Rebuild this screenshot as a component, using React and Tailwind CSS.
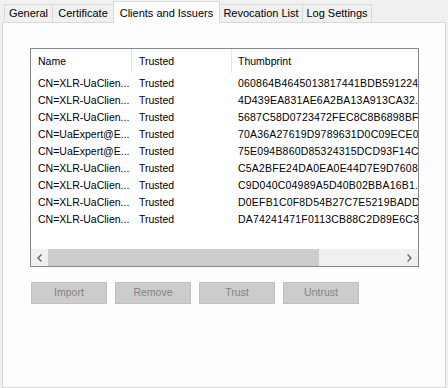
const tabs = [
  { label: 'General', w: 'w-[49px]' },
  { label: 'Certificate', w: 'w-[62px]' },
  { label: 'Clients and Issuers', w: 'w-[107px]', active: true },
  { label: 'Revocation List', w: 'w-[84px]' },
  { label: 'Log Settings', w: 'w-[70px]' },
]

// thumbprints as they show in the clipped column
const rows = [
  ['CN=XLR-UaClien...', 'Trusted', '060864B4645013817441BDB591224'],
  ['CN=XLR-UaClien...', 'Trusted', '4D439EA831AE6A2BA13A913CA32..'],
  ['CN=XLR-UaClien...', 'Trusted', '5687C58D0723472FEC8C8B6898BF.'],
  ['CN=UaExpert@E...', 'Trusted', '70A36A27619D9789631D0C09ECE0'],
  ['CN=UaExpert@E...', 'Trusted', '75E094B860D85324315DCD93F14C'],
  ['CN=XLR-UaClien...', 'Trusted', 'C5A2BFE24DA0EA0E44D7E9D7608.'],
  ['CN=XLR-UaClien...', 'Trusted', 'C9D040C04989A5D40B02BBA16B1..'],
  ['CN=XLR-UaClien...', 'Trusted', 'D0EFB1C0F8D54B27C7E5219BADD'],
  ['CN=XLR-UaClien...', 'Trusted', 'DA74241471F0113CB88C2D89E6C3'],
]

function Chevron({ dir }) {
  return (
    <svg width="5" height="8" viewBox="0 0 5 8" className="shrink-0">
      <path
        d={dir === 'left' ? 'M4.5 0.5 L1 4 L4.5 7.5' : 'M0.5 0.5 L4 4 L0.5 7.5'}
        fill="none"
        stroke="#606060"
        strokeWidth="1.3"
      />
    </svg>
  )
}

function Button({ children }) {
  return (
    <div className="flex h-[22px] w-[76px] items-center justify-center border border-[#bfbfbf] bg-[#cccccc] text-[#838383]">
      {children}
    </div>
  )
}

export default function App() {
  return (
    <div
      className="h-[388px] w-[448px] overflow-hidden bg-[#f0f0f0] text-[10.5px] text-black"
      style={{ fontFamily: '"Liberation Sans", Arial, sans-serif' }}
    >
      {/* tab strip */}
      <div className="flex h-[22px] items-end pl-[4px]">
        {tabs.map((t) =>
          t.active ? (
            <div
              key={t.label}
              className={`relative z-10 -mb-px -mr-px flex h-[22px] ${t.w} items-start justify-center border border-b-0 border-[#d9d9d9] bg-[#fdfdfd] pt-[3px] text-[11px]`}
            >
              {t.label}
            </div>
          ) : (
            <div
              key={t.label}
              className={`-mr-px flex h-[18px] ${t.w} items-center justify-center border border-b-0 border-[#d9d9d9] bg-[#f0f0f0] pb-px text-[11px]`}
            >
              {t.label}
            </div>
          ),
        )}
      </div>

      {/* page */}
      <div className="mx-[2px] h-[366px] border border-[#d9d9d9] bg-[#fdfdfd] pl-[27px] pt-[25px]">
        <div className="flex h-[219px] w-[389px] flex-col border border-[#828790] bg-white">
          <div className="flex-1 overflow-hidden">
            <div className="flex h-[26px] items-center">
              <div className="w-[100px] shrink-0 pl-[7px]">Name</div>
              <div className="h-[24px] w-px shrink-0 self-start bg-[#e5e5e5]" />
              <div className="w-[99px] shrink-0 pl-[7px]">Trusted</div>
              <div className="h-[24px] w-px shrink-0 self-start bg-[#e5e5e5]" />
              <div className="pl-[6px]">Thumbprint</div>
            </div>
            {rows.map(([name, trusted, thumb], i) => (
              <div key={i} className="flex h-[17px] items-center">
                <div className="w-[100px] shrink-0 whitespace-nowrap pl-[7px]">{name}</div>
                <div className="w-[100px] shrink-0 whitespace-nowrap pl-[8px]">{trusted}</div>
                <div className="shrink-0 whitespace-nowrap pl-[7px] tracking-[0.2px]">{thumb}</div>
              </div>
            ))}
          </div>
          {/* horizontal scrollbar */}
          <div className="flex h-[17px] items-center bg-[#f0f0f0]">
            <div className="flex w-[17px] items-center justify-center">
              <Chevron dir="left" />
            </div>
            <div className="h-[17px] w-[271px] bg-[#cdcdcd]" />
            <div className="flex-1" />
            <div className="flex w-[17px] items-center justify-center">
              <Chevron dir="right" />
            </div>
          </div>
        </div>

        <div className="mt-[15px] flex gap-[8px] pl-px">
          <Button>Import</Button>
          <Button>Remove</Button>
          <Button>Trust</Button>
          <Button>Untrust</Button>
        </div>
      </div>
    </div>
  )
}
